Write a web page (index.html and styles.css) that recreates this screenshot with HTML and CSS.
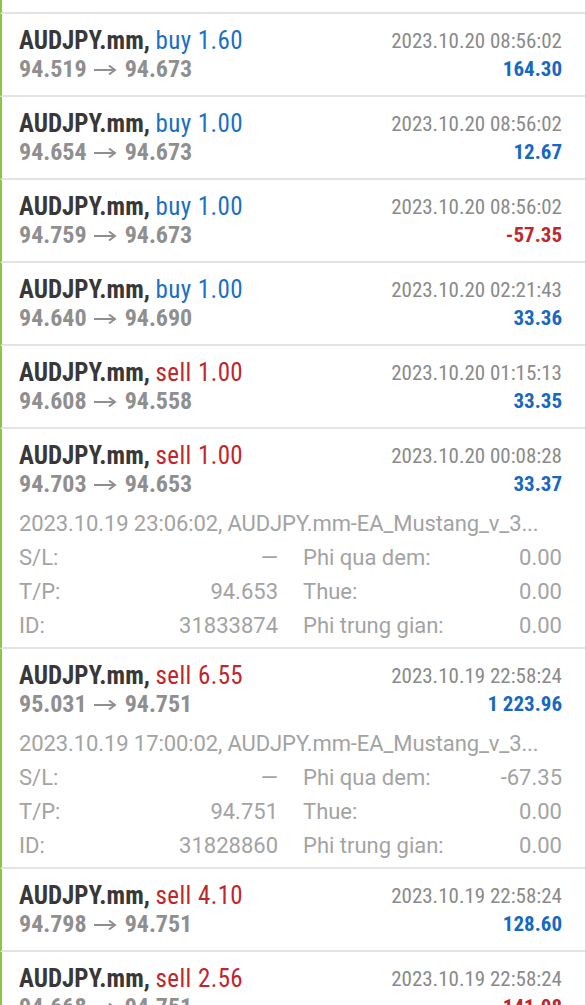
FILE: index.html
```html
<!DOCTYPE html>
<html>
<head>
<meta charset="utf-8">
<link rel="stylesheet" href="styles.css">
</head>
<body>
<div class="list">
  <div class="row partial"></div>

  <div class="row">
    <div class="head">
      <div class="left">
        <div class="title">AUDJPY.mm, <span class="buy">buy 1.60</span></div>
        <div class="price">94.519<svg class="arrow" viewBox="0 0 24 12"><path d="M1 6H22M16 1.5L22 6L16 10.5"/></svg>94.673</div>
      </div>
      <div class="right">
        <div class="date">2023.10.20 08:56:02</div>
        <div class="profit pos">164.30</div>
      </div>
    </div>
  </div>

  <div class="row">
    <div class="head">
      <div class="left">
        <div class="title">AUDJPY.mm, <span class="buy">buy 1.00</span></div>
        <div class="price">94.654<svg class="arrow" viewBox="0 0 24 12"><path d="M1 6H22M16 1.5L22 6L16 10.5"/></svg>94.673</div>
      </div>
      <div class="right">
        <div class="date">2023.10.20 08:56:02</div>
        <div class="profit pos">12.67</div>
      </div>
    </div>
  </div>

  <div class="row">
    <div class="head">
      <div class="left">
        <div class="title">AUDJPY.mm, <span class="buy">buy 1.00</span></div>
        <div class="price">94.759<svg class="arrow" viewBox="0 0 24 12"><path d="M1 6H22M16 1.5L22 6L16 10.5"/></svg>94.673</div>
      </div>
      <div class="right">
        <div class="date">2023.10.20 08:56:02</div>
        <div class="profit neg">-57.35</div>
      </div>
    </div>
  </div>

  <div class="row">
    <div class="head">
      <div class="left">
        <div class="title">AUDJPY.mm, <span class="buy">buy 1.00</span></div>
        <div class="price">94.640<svg class="arrow" viewBox="0 0 24 12"><path d="M1 6H22M16 1.5L22 6L16 10.5"/></svg>94.690</div>
      </div>
      <div class="right">
        <div class="date">2023.10.20 02:21:43</div>
        <div class="profit pos">33.36</div>
      </div>
    </div>
  </div>

  <div class="row">
    <div class="head">
      <div class="left">
        <div class="title">AUDJPY.mm, <span class="sell">sell 1.00</span></div>
        <div class="price">94.608<svg class="arrow" viewBox="0 0 24 12"><path d="M1 6H22M16 1.5L22 6L16 10.5"/></svg>94.558</div>
      </div>
      <div class="right">
        <div class="date">2023.10.20 01:15:13</div>
        <div class="profit pos">33.35</div>
      </div>
    </div>
  </div>

  <div class="row expanded">
    <div class="head">
      <div class="left">
        <div class="title">AUDJPY.mm, <span class="sell">sell 1.00</span></div>
        <div class="price">94.703<svg class="arrow" viewBox="0 0 24 12"><path d="M1 6H22M16 1.5L22 6L16 10.5"/></svg>94.653</div>
      </div>
      <div class="right">
        <div class="date">2023.10.20 00:08:28</div>
        <div class="profit pos">33.37</div>
      </div>
    </div>
    <div class="details">
      <div class="comment">2023.10.19 23:06:02, AUDJPY.mm-EA_Mustang_v_3...</div>
      <div class="grid">
        <div class="pair"><span>S/L:</span><span>—</span></div>
        <div class="pair"><span>Phi qua dem:</span><span>0.00</span></div>
        <div class="pair"><span>T/P:</span><span>94.653</span></div>
        <div class="pair"><span>Thue:</span><span>0.00</span></div>
        <div class="pair"><span>ID:</span><span>31833874</span></div>
        <div class="pair"><span>Phi trung gian:</span><span>0.00</span></div>
      </div>
    </div>
  </div>

  <div class="row expanded">
    <div class="head">
      <div class="left">
        <div class="title">AUDJPY.mm, <span class="sell">sell 6.55</span></div>
        <div class="price">95.031<svg class="arrow" viewBox="0 0 24 12"><path d="M1 6H22M16 1.5L22 6L16 10.5"/></svg>94.751</div>
      </div>
      <div class="right">
        <div class="date">2023.10.19 22:58:24</div>
        <div class="profit pos">1 223.96</div>
      </div>
    </div>
    <div class="details">
      <div class="comment">2023.10.19 17:00:02, AUDJPY.mm-EA_Mustang_v_3...</div>
      <div class="grid">
        <div class="pair"><span>S/L:</span><span>—</span></div>
        <div class="pair"><span>Phi qua dem:</span><span>-67.35</span></div>
        <div class="pair"><span>T/P:</span><span>94.751</span></div>
        <div class="pair"><span>Thue:</span><span>0.00</span></div>
        <div class="pair"><span>ID:</span><span>31828860</span></div>
        <div class="pair"><span>Phi trung gian:</span><span>0.00</span></div>
      </div>
    </div>
  </div>

  <div class="row">
    <div class="head">
      <div class="left">
        <div class="title">AUDJPY.mm, <span class="sell">sell 4.10</span></div>
        <div class="price">94.798<svg class="arrow" viewBox="0 0 24 12"><path d="M1 6H22M16 1.5L22 6L16 10.5"/></svg>94.751</div>
      </div>
      <div class="right">
        <div class="date">2023.10.19 22:58:24</div>
        <div class="profit pos">128.60</div>
      </div>
    </div>
  </div>

  <div class="row">
    <div class="head">
      <div class="left">
        <div class="title">AUDJPY.mm, <span class="sell">sell 2.56</span></div>
        <div class="price">94.668<svg class="arrow" viewBox="0 0 24 12"><path d="M1 6H22M16 1.5L22 6L16 10.5"/></svg>94.751</div>
      </div>
      <div class="right">
        <div class="date">2023.10.19 22:58:24</div>
        <div class="profit neg">141.08</div>
      </div>
    </div>
  </div>
</div>
</body>
</html>
```

FILE: styles.css
```css
html, body {
  margin: 0;
  padding: 0;
  background: #ffffff;
}
body {
  width: 586px;
  height: 1005px;
  overflow: hidden;
  font-family: "Roboto Condensed", Roboto, "Liberation Sans", sans-serif;
}
.list {
  width: 585px;
  border-right: 1px solid #d6d6d6;
  background: #fff;
}
.row {
  border-left: 2px solid #8cc63f;
  border-bottom: 2px solid #e3e3e3;
  padding: 13px 23px 12px 17px;
}
.row.partial {
  height: 12px;
  padding: 0;
}
.row.expanded {
  padding-bottom: 4px;
}
.head {
  display: flex;
  justify-content: space-between;
}
.title {
  height: 28px;
  font-size: 25px;
  line-height: 28px;
  font-weight: 700;
  color: #383838;
  white-space: nowrap;
}
.title span {
  font-weight: 400;
  letter-spacing: 0.4px;
}
.buy { color: #1a70c4; }
.sell { color: #c0272d; }
.price {
  display: flex;
  align-items: center;
  height: 28px;
  font-size: 24px;
  line-height: 28px;
  font-weight: 700;
  color: #8f8f8f;
  white-space: nowrap;
}
.arrow {
  width: 24px;
  height: 12px;
  margin: 1px 8px 0 6px;
  fill: none;
  stroke: #8f8f8f;
  stroke-width: 2;
}
.right {
  text-align: right;
}
.date {
  height: 28px;
  font-size: 21px;
  line-height: 28px;
  color: #8a8a8a;
  white-space: nowrap;
}
.profit {
  height: 28px;
  font-size: 21px;
  line-height: 28px;
  font-weight: 700;
  white-space: nowrap;
}
.profit.pos { color: #1668c2; }
.profit.neg { color: #c0272d; }
.details {
  margin-top: 9px;
  font-family: Roboto, "Liberation Sans", sans-serif;
  font-size: 22px;
  line-height: 34px;
  color: #a3a3a3;
}
.comment {
  white-space: nowrap;
  letter-spacing: -0.1px;
}
.grid {
  display: grid;
  grid-template-columns: 1fr 1fr;
  column-gap: 25px;
}
.pair {
  display: flex;
  justify-content: space-between;
  white-space: nowrap;
}
```
